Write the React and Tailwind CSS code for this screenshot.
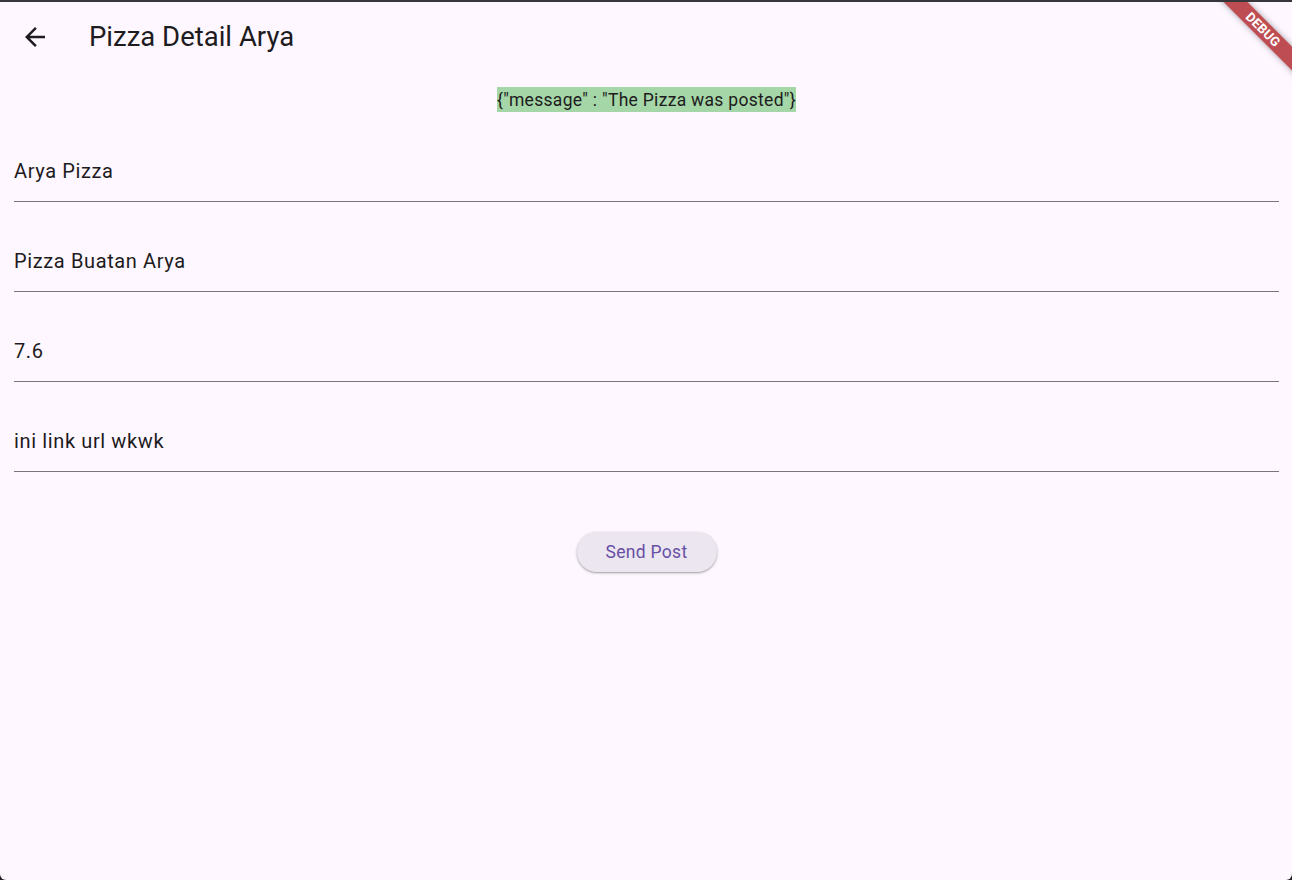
import React from 'react'

function BackArrow() {
  return (
    <svg width="30" height="30" viewBox="0 0 24 24" fill="currentColor">
      <path d="M20 11H7.83l5.59-5.59L12 4l-8 8 8 8 1.41-1.41L7.83 13H20v-2z" />
    </svg>
  )
}

function Field({ value }) {
  return (
    <div className="border-b border-[#79747e] pt-[44px] pb-[15px]">
      <div className="text-[20px] leading-[30px] tracking-[0.625px] text-[#1d1b20]">
        {value}
      </div>
    </div>
  )
}

export default function App() {
  return (
    <div className="h-[880px] w-full bg-[#202020] font-['Roboto',sans-serif]">
      <div className="relative flex h-full flex-col overflow-hidden rounded-b-[6px] border-t-2 border-[#37363a] bg-[#fef7ff]">
        {/* app bar */}
        <div className="flex h-[70px] shrink-0 items-center text-[#1d1b20]">
          <div className="flex w-[70px] items-center justify-center">
            <BackArrow />
          </div>
          <div className="pl-[19px] text-[27.5px] leading-none">Pizza Detail Arya</div>
        </div>

        {/* body */}
        <div className="flex flex-col pl-[14px] pr-[13px]">
          <div className="mt-[15px] flex justify-center">
            <span className="bg-[#a5d6a7] pt-[1px] text-[17.5px] leading-[24px] tracking-[0.3px] text-[#1d1b20]">
              {'{"message" : "The Pizza was posted"}'}
            </span>
          </div>

          <Field value="Arya Pizza" />
          <Field value="Pizza Buatan Arya" />
          <Field value="7.6" />
          <Field value="ini link url wkwk" />

          <div className="mt-[60px] flex justify-center">
            <button className="h-[40px] w-[140px] rounded-full bg-[#ece6f1] text-[17.5px] font-normal tracking-[0.3px] text-[#6750a4] shadow-[0_1px_3px_rgba(0,0,0,0.28),0_1px_1px_rgba(0,0,0,0.12)]">
              Send Post
            </button>
          </div>
        </div>

        {/* debug banner */}
        <div className="absolute left-[1188px] top-[19px] flex h-[17px] w-[150px] rotate-45 items-center justify-center bg-[rgba(170,30,34,0.78)] shadow-[0_0_6px_rgba(0,0,0,0.35)]">
          <span className="text-[13px] font-bold leading-none tracking-[0.2px] text-white">DEBUG</span>
        </div>
      </div>
    </div>
  )
}
